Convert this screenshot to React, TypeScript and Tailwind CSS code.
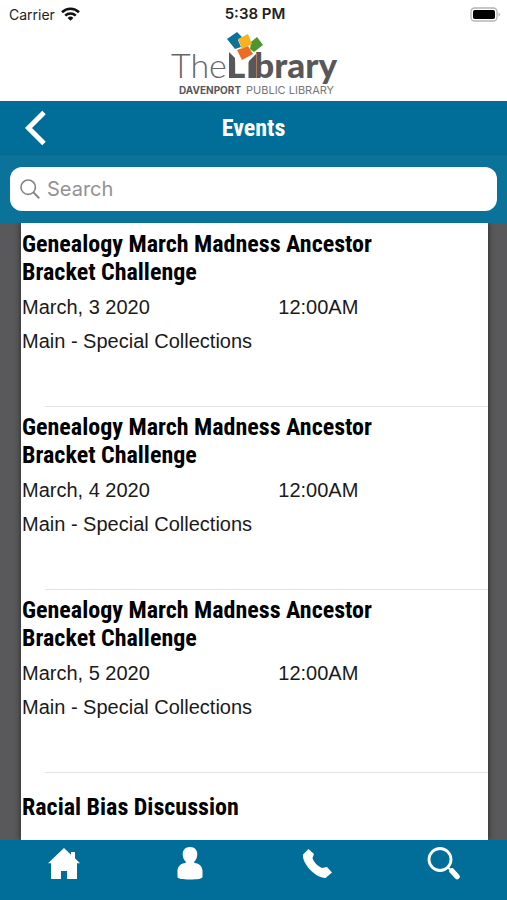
import { useState } from 'react';

const events = [
  { title: 'Genealogy March Madness Ancestor Bracket Challenge', date: 'March, 3 2020', time: '12:00AM', place: 'Main - Special Collections' },
  { title: 'Genealogy March Madness Ancestor Bracket Challenge', date: 'March, 4 2020', time: '12:00AM', place: 'Main - Special Collections' },
  { title: 'Genealogy March Madness Ancestor Bracket Challenge', date: 'March, 5 2020', time: '12:00AM', place: 'Main - Special Collections' },
  { title: 'Racial Bias Discussion', date: '', time: '', place: '' },
];

function StatusBar() {
  return (
    <div className="grid grid-cols-3 items-center h-7 pl-[9px] pr-[6px] font-['Inter','Liberation_Sans',sans-serif] text-[14px] text-[#222]">
      <div className="flex items-center gap-[6px]">
        <span>Carrier</span>
        <svg className="w-[19px] h-[14px]" viewBox="0 0 19 14" fill="none" stroke="#111" strokeWidth="2.6" aria-hidden="true">
          <path d="M1 5.2C5.8.6 13.2.6 18 5.2" />
          <path d="M4.2 8.6c3-2.8 7.6-2.8 10.6 0" />
          <path d="M6.6 10.9 9.5 13.8l2.9-2.9a4.2 4.2 0 0 0-5.8 0Z" fill="#111" stroke="none" />
        </svg>
      </div>
      <span className="text-center font-semibold text-[15px]">5:38 PM</span>
      <svg className="w-[31px] h-[15px] justify-self-end" viewBox="0 0 31 15" aria-hidden="true">
        <rect x="1" y="1" width="26" height="13" rx="3.5" fill="#fff" stroke="#b5b5b5" strokeWidth="1.3" />
        <rect x="3" y="3" width="22" height="9" rx="1.8" fill="#000" />
        <path d="M28.5 5.5v4c2-.7 2-3.3 0-4Z" fill="#b5b5b5" />
      </svg>
    </div>
  );
}

function Logo() {
  return (
    <svg className="w-[170px] h-[70px]" viewBox="0 0 170 70" role="img" aria-label="The Library, Davenport Public Library">
      <text x="2" y="50" fontFamily="Lato, sans-serif" fontWeight="300" fontSize="34" fill="#666">The</text>
      <text x="58" y="50" fontFamily="Lato, sans-serif" fontWeight="900" fontSize="35" fill="#58585a">Library</text>
      {/* open book notch cut between the L and the i */}
      <path d="M57 18h30v16H66l-9-5Z" fill="#fff" />
      <path d="m60 24 6 6v20h-6Z" fill="#58585a" />
      <path d="m80 33 7-7v24h-7Z" fill="#58585a" />
      <path d="M78 34h1.500v16H78Z" fill="#fff" />
      <path d="m58 11 10-7 5 5-4 3 3 7-6 2Z" fill="#0b7299" />
      <path d="m82 14 6-5 6 8-9 7-4-3Z" fill="#4c962e" />
      <path d="m68 22 11-4 5 8-11 6Z" fill="#ee6b23" />
      <path d="m69 11 10-5 4 10-10 5Z" fill="#f6b221" />
      <text x="10" y="66" fontFamily="Inter, sans-serif" fontWeight="700" fontSize="10" fill="#58585a">DAVENPORT</text>
      <text x="77" y="66" fontFamily="Inter, sans-serif" fontWeight="400" fontSize="11" fill="#77777a">PUBLIC LIBRARY</text>
    </svg>
  );
}

function SearchBar() {
  const [query, setQuery] = useState('');

  return (
    <div className="px-[10px] py-3 border-t border-[#07668a] bg-[#0b7299]">
      <label className="flex items-center gap-[7px] h-11 px-[10px] rounded-xl bg-white">
        <svg className="w-5 h-5 shrink-0" viewBox="0 0 20 20" fill="none" stroke="#858588" strokeWidth="1.6" aria-hidden="true">
          <circle cx="8.2" cy="8.2" r="7.2" />
          <path d="m13.4 13.4 5.8 5.8" strokeWidth="2" />
        </svg>
        <input
          type="search"
          aria-label="Search"
          placeholder="Search"
          value={query}
          onChange={(e) => setQuery(e.target.value)}
          className="min-w-0 flex-1 bg-transparent outline-none text-[20px] font-['Inter','Liberation_Sans',sans-serif] placeholder:text-[#929295]"
        />
      </label>
    </div>
  );
}

function TabBar() {
  return (
    <nav className="grid grid-cols-4 h-15 shrink-0 pt-[6px] bg-[#006e98] text-white">
      <a href="#home" aria-label="Home" className="flex justify-center">
        <svg className="w-9 h-9" viewBox="0 0 36 36" fill="currentColor">
          <path d="M19 2 3 17.3h3V33h10v-8h6v8h10V17.3h3l-5-5V6h-4v2.8Z" />
        </svg>
      </a>
      <a href="#account" aria-label="Account" className="flex justify-center">
        <svg className="w-9 h-9" viewBox="0 0 36 36" fill="currentColor">
          <path d="M18 1c-4.5 0-7.3 2.8-7.3 7 0 3.3 1.2 6 3 7.6v1.4C8.5 17.500 5.500 20.600 5.500 25v6c0 1.700 5 2.500 12.500 2.500s12.500-.8 12.500-2.500v-6c0-4.400-3-7.500-8.200-8v-1.400c1.800-1.600 3-4.300 3-7.600 0-4.200-2.800-7-7.300-7Z" />
        </svg>
      </a>
      <a href="#call" aria-label="Call" className="flex justify-center">
        <svg className="w-9 h-9" viewBox="0 0 36 36" fill="currentColor">
          <path d="M9.5 3 4 8.5c-1 9 12 23 22.5 23.5L33 26.5 28 21l-5 1c-4-1.5-8.5-6-9.5-10l1.5-4Z" />
        </svg>
      </a>
      <a href="#search" aria-label="Search catalog" className="flex justify-center">
        <svg className="w-9 h-9" viewBox="0 0 36 36" fill="none" stroke="currentColor">
          <circle cx="14" cy="13.5" r="11" strokeWidth="2.8" />
          <path d="M22 21.5 26 25" strokeWidth="2" />
          <path d="M26 25 31 30.5" strokeWidth="5.5" strokeLinecap="round" />
        </svg>
      </a>
    </nav>
  );
}

export default function App() {
  return (
    <div className="flex flex-col h-screen bg-white">
      <header className="shrink-0">
        <StatusBar />
        <div className="flex justify-center pb-1 h-[73px]">
          <Logo />
        </div>
        <div className="grid grid-cols-3 items-center h-[53px] bg-[#006e98] text-white">
          <button type="button" aria-label="Back" className="justify-self-start ml-[22px]">
            <svg className="w-7 h-9" viewBox="0 0 28 36" fill="none" stroke="currentColor" strokeWidth="5">
              <path d="M22 2.5 6.5 18 22 33.5" />
            </svg>
          </button>
          <h1 className="text-center text-[24px] font-bold font-['Liberation_Sans_Narrow','Roboto_Condensed',sans-serif]">Events</h1>
        </div>
        <SearchBar />
      </header>

      <main className="flex-1 min-h-0 overflow-hidden pl-[21px] pr-[19px] bg-[#59595b]">
        <ul className="h-full pt-px bg-white shadow-[0_0_6px_#222] font-['Liberation_Sans',sans-serif] text-[20px] text-[#1a1a1a]">
          {events.map((event, i) => (
            <li key={i} className="pt-[6px]">
              <div className="pl-px pb-12">
                <h2 className="flex items-center min-h-14 max-w-[400px] text-[24px] leading-7 font-bold text-black font-['Liberation_Sans_Narrow','Roboto_Condensed',sans-serif]">
                  {event.title}
                </h2>
                <div className="grid grid-cols-[55%_1fr] pt-1 leading-[34px]">
                  <span>{event.date}</span>
                  <span>{event.time}</span>
                </div>
                <p className="leading-[34px]">{event.place}</p>
              </div>
              <div className="ml-6 h-px bg-[#e2e2e4]" />
            </li>
          ))}
        </ul>
      </main>

      <TabBar />
    </div>
  );
}
